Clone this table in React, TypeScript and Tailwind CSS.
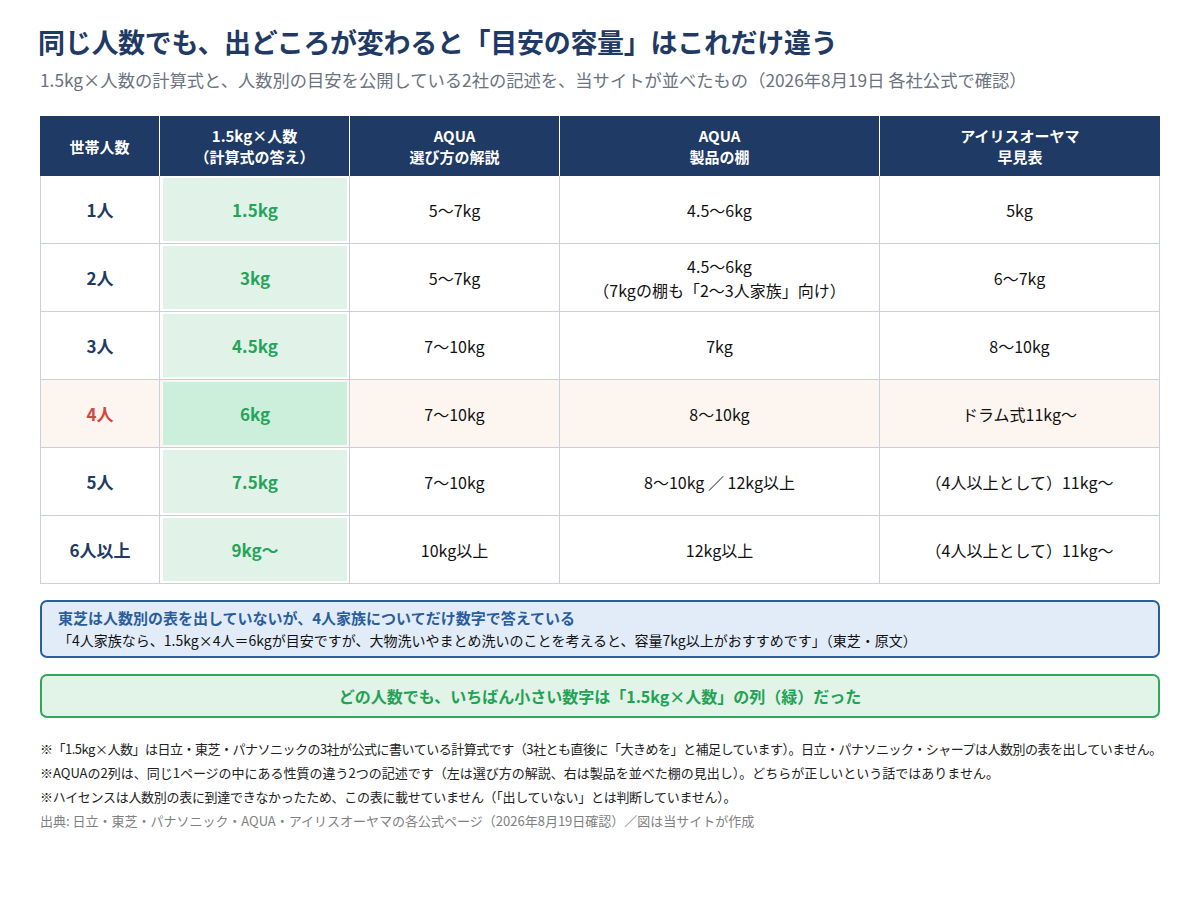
import React from "react";

const FONT = {
  fontFamily: '"Noto Sans CJK JP", "Noto Sans", sans-serif',
};

type Row = {
  label: string;
  calc: string;
  a: string;
  b: React.ReactNode;
  c: string;
  hi?: boolean;
};

const rows: Row[] = [
  { label: "1人", calc: "1.5kg", a: "5〜7kg", b: "4.5〜6kg", c: "5kg" },
  {
    label: "2人",
    calc: "3kg",
    a: "5〜7kg",
    b: (
      <>
        <div>4.5〜6kg</div>
        <div>（7kgの棚も「2〜3人家族」向け）</div>
      </>
    ),
    c: "6〜7kg",
  },
  { label: "3人", calc: "4.5kg", a: "7〜10kg", b: "7kg", c: "8〜10kg" },
  { label: "4人", calc: "6kg", a: "7〜10kg", b: "8〜10kg", c: "ドラム式11kg〜", hi: true },
  { label: "5人", calc: "7.5kg", a: "7〜10kg", b: "8〜10kg ／ 12kg以上", c: "（4人以上として）11kg〜" },
  { label: "6人以上", calc: "9kg〜", a: "10kg以上", b: "12kg以上", c: "（4人以上として）11kg〜" },
];

export default function App() {
  return (
    <div className="w-[1200px] h-[900px] bg-white px-10 pt-6" style={FONT}>
      <h1 className="text-[27px] leading-[36px] font-bold text-[#1f3a64] -ml-[2px] tracking-[-0.3px] whitespace-nowrap">
        同じ人数でも、出どころが変わると「目安の容量」はこれだけ違う
      </h1>
      <p className="mt-2 text-[17.3px] leading-[24px] text-[#6b7280] whitespace-nowrap">
        1.5kg×人数の計算式と、人数別の目安を公開している2社の記述を、当サイトが並べたもの（2026年8月19日 各社公式で確認）
      </p>

      <div className="mt-6 w-[1120px]">
        <div className="grid grid-cols-[120px_190px_210px_320px_280px] h-[60px] bg-[#1f3a64] text-white text-[15px] leading-[21px] font-bold">
          <div className="flex items-center justify-center border-r border-white">世帯人数</div>
          <div className="flex flex-col items-center justify-center border-r border-white">
            <div>1.5kg×人数</div>
            <div>（計算式の答え）</div>
          </div>
          <div className="flex flex-col items-center justify-center border-r border-white">
            <div>AQUA</div>
            <div>選び方の解説</div>
          </div>
          <div className="flex flex-col items-center justify-center border-r border-white">
            <div>AQUA</div>
            <div>製品の棚</div>
          </div>
          <div className="flex flex-col items-center justify-center">
            <div>アイリスオーヤマ</div>
            <div>早見表</div>
          </div>
        </div>

        <div className="border-l border-[#c9d0dc]">
          {rows.map((r) => (
            <div
              key={r.label}
              className={
                "grid grid-cols-[119px_190px_210px_320px_280px] h-[68px] border-b border-[#c9d0dc] " +
                (r.hi ? "bg-[#fdf6f0]" : "bg-white")
              }
            >
              <div
                className={
                  "flex items-center justify-center border-r border-[#c9d0dc] text-[17px] font-bold " +
                  (r.hi ? "text-[#d9443f]" : "text-[#1f3a64]")
                }
              >
                {r.label}
              </div>
              <div className="border-r border-[#c9d0dc] p-[2px] pl-[3px]">
                <div
                  className={
                    "h-full flex items-center justify-center text-[17px] font-bold text-[#27a35a] " +
                    (r.hi ? "bg-[#ccefdc]" : "bg-[#e1f3e8]")
                  }
                >
                  {r.calc}
                </div>
              </div>
              <div className="flex items-center justify-center border-r border-[#c9d0dc] text-[16px] text-[#111]">
                {r.a}
              </div>
              <div className="flex flex-col items-center justify-center border-r border-[#c9d0dc] text-[16px] leading-[24px] text-[#111] text-center">
                {r.b}
              </div>
              <div className="flex items-center justify-center border-r border-[#c9d0dc] text-[16px] text-[#111]">
                {r.c}
              </div>
            </div>
          ))}
        </div>
      </div>

      <div className="mt-4 w-[1120px] rounded-[7px] border-2 border-[#2d5e9c] bg-[#e2ecf8] px-[16px] py-[5px] leading-[22px]">
        <div className="text-[15px] font-bold text-[#2a5d9b]">東芝は人数別の表を出していないが、4人家族についてだけ数字で答えている</div>
        <div className="text-[14px] text-[#111]">
          「4人家族なら、1.5kg×4人＝6kgが目安ですが、大物洗いやまとめ洗いのことを考えると、容量7kg以上がおすすめです」（東芝・原文）
        </div>
      </div>

      <div className="mt-4 w-[1120px] h-[44px] rounded-[7px] border-2 border-[#2ea85a] bg-[#e2f3e8] flex items-center justify-center text-[16px] font-bold text-[#22a255]">
        どの人数でも、いちばん小さい数字は「1.5kg×人数」の列（緑）だった
      </div>

      <div className="mt-[19px] text-[13px] leading-[24px] text-[#222] whitespace-nowrap">
        <div className="tracking-[-0.5px]">※「1.5kg×人数」は日立・東芝・パナソニックの3社が公式に書いている計算式です（3社とも直後に「大きめを」と補足しています）。日立・パナソニック・シャープは人数別の表を出していません。</div>
        <div>※AQUAの2列は、同じ1ページの中にある性質の違う2つの記述です（左は選び方の解説、右は製品を並べた棚の見出し）。どちらが正しいという話ではありません。</div>
        <div className="tracking-[-0.3px]">※ハイセンスは人数別の表に到達できなかったため、この表に載せていません（「出していない」とは判断していません）。</div>
        <div className="text-[#808080]">出典: 日立・東芝・パナソニック・AQUA・アイリスオーヤマの各公式ページ（2026年8月19日確認）／図は当サイトが作成</div>
      </div>
    </div>
  );
}
